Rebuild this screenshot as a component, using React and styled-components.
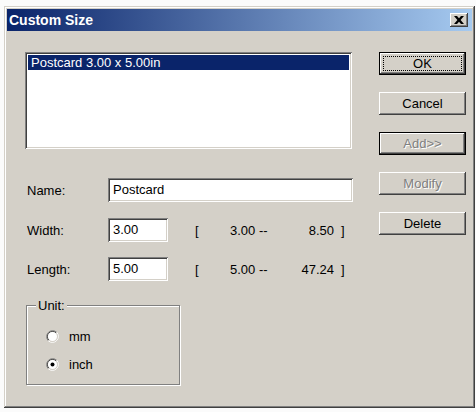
import React from "react";
import styled, { createGlobalStyle } from "styled-components";

const GlobalStyle = createGlobalStyle`
  html, body {
    margin: 0;
    padding: 0;
    background: #fbfbfb;
  }
  body {
    font-family: "Liberation Sans", Arial, sans-serif;
    font-size: 13px;
  }
`;

const Window = styled.div`
  box-sizing: border-box;
  margin: 6px 0 0 4px;
  width: 471px;
  height: 402px;
  padding: 3px;
  background: #d4d0c8;
  box-shadow: inset -1px -1px #404040, inset 1px 1px #d4d0c8,
    inset -2px -2px #808080, inset 2px 2px #ffffff;
  display: flex;
  flex-direction: column;
`;

const TitleBar = styled.div`
  height: 22px;
  display: flex;
  align-items: center;
  justify-content: space-between;
  padding: 0 4px 0 2px;
  background: linear-gradient(to right, #0a246a, #a6caf0);
`;

const TitleText = styled.span`
  color: #fff;
  font-family: "Liberation Sans", Arial, sans-serif;
  font-weight: bold;
  font-size: 14px;
`;

const CloseButton = styled.button`
  box-sizing: border-box;
  width: 18px;
  height: 14px;
  padding: 0;
  border: none;
  background: #d4d0c8;
  display: flex;
  align-items: center;
  justify-content: center;
  box-shadow: inset -1px -1px #404040, inset 1px 1px #fff,
    inset -2px -2px #808080, inset 2px 2px #d4d0c8;
`;

const Body = styled.div`
  display: flex;
  padding: 21px 0 0 18px;
`;

const LeftColumn = styled.div`
  display: flex;
  flex-direction: column;
  width: 335px;
`;

const sunken = `
  box-shadow: inset 1px 1px #808080, inset -1px -1px #fff,
    inset 2px 2px #404040, inset -2px -2px #d4d0c8;
`;

const ListBox = styled.div`
  box-sizing: border-box;
  width: 327px;
  height: 97px;
  padding: 3px;
  background: #fff;
  ${sunken}
`;

const ListItem = styled.div`
  height: 15px;
  line-height: 15px;
  padding-left: 3px;
  color: ${(p) => (p.$selected ? "#fff" : "#000")};
  background: ${(p) => (p.$selected ? "#0a246a" : "transparent")};
`;

const FormRows = styled.div`
  display: flex;
  flex-direction: column;
  margin-top: 29px;
  padding-left: 2px;
`;

const Row = styled.div`
  display: flex;
  align-items: center;
  height: 24px;
  margin-top: ${(p) => p.$gap || 0}px;
`;

const Label = styled.span`
  width: 81px;
  color: #000;
`;

const TextBox = styled.div`
  box-sizing: border-box;
  width: ${(p) => p.$width}px;
  height: 24px;
  line-height: 24px;
  padding-left: 5px;
  background: #fff;
  color: #000;
  ${sunken}
`;

const RangeOpen = styled.span`
  margin-left: 27px;
  width: 35px;
`;

const RangeMin = styled.span`
  width: 64px;
`;

const RangeMax = styled.span`
  width: 40px;
  text-align: right;
`;

const RangeClose = styled.span`
  margin-left: 7px;
`;

const GroupBox = styled.div`
  position: relative;
  box-sizing: border-box;
  width: 154px;
  height: 80px;
  margin: 24px 0 0 1px;
  padding: 24px 0 0 19px;
  border: 1px solid #808080;
  box-shadow: inset 1px 1px #fff, 1px 1px #fff;
  display: flex;
  flex-direction: column;
  gap: 15px;
`;

const Legend = styled.span`
  position: absolute;
  top: -8px;
  left: 9px;
  padding: 0 2px;
  background: #d4d0c8;
  line-height: 15px;
`;

const RadioRow = styled.label`
  display: flex;
  align-items: center;
  height: 13px;
  gap: 10px;
`;

const ButtonColumn = styled.div`
  display: flex;
  flex-direction: column;
  gap: 17px;
  margin-left: 19px;
`;

const Button = styled.button`
  position: relative;
  box-sizing: border-box;
  width: 87px;
  height: 23px;
  padding: 0;
  background: #d4d0c8;
  font-family: "Liberation Sans", Arial, sans-serif;
  font-size: 13px;
  color: ${(p) => (p.disabled ? "#808080" : "#000")};
  text-shadow: ${(p) => (p.disabled ? "1px 1px #fff" : "none")};
  border: ${(p) => (p.$default ? "1px solid #000" : "none")};
  box-shadow: inset -1px -1px #404040, inset 1px 1px #fff,
    inset -2px -2px #808080, inset 2px 2px #d4d0c8;
`;

const FocusRing = styled.span`
  position: absolute;
  inset: 3px;
  border: 1px dotted #000;
`;

const CloseGlyph = () => (
  <svg width="10" height="8" viewBox="0 0 10 8">
    <path d="M0 0h3l2 2.3L7 0h3L6.6 4 10 8H7L5 5.7 3 8H0l3.4-4z" fill="#000" />
  </svg>
);

const RadioMark = ({ checked }) => (
  <svg width="13" height="13" viewBox="0 0 13 13">
    <path d="M2.26 10.74A6 6 0 0 1 10.74 2.26" stroke="#808080" fill="none" />
    <path d="M10.74 2.26A6 6 0 0 1 2.26 10.74" stroke="#fff" fill="none" />
    <path d="M2.96 10.04A5 5 0 0 1 10.04 2.96" stroke="#404040" fill="none" />
    <path d="M10.04 2.96A5 5 0 0 1 2.96 10.04" stroke="#d4d0c8" fill="none" />
    <circle cx="6.5" cy="6.5" r="4.5" fill="#fff" />
    {checked && <circle cx="6.5" cy="6.5" r="2" fill="#000" />}
  </svg>
);

const ranges = [
  { label: "Width:", value: "3.00", min: "3.00", max: "8.50", gap: 16 },
  { label: "Length:", value: "5.00", min: "5.00", max: "47.24", gap: 15 },
];

const App = () => {
  return (
    <>
      <GlobalStyle />
      <Window>
        <TitleBar>
          <TitleText>Custom Size</TitleText>
          <CloseButton>
            <CloseGlyph />
          </CloseButton>
        </TitleBar>
        <Body>
          <LeftColumn>
            <ListBox>
              <ListItem $selected>Postcard 3.00 x 5.00in</ListItem>
            </ListBox>
            <FormRows>
              <Row>
                <Label>Name:</Label>
                <TextBox $width={245}>Postcard</TextBox>
              </Row>
              {ranges.map((r) => (
                <Row key={r.label} $gap={r.gap}>
                  <Label>{r.label}</Label>
                  <TextBox $width={60}>{r.value}</TextBox>
                  <RangeOpen>[</RangeOpen>
                  <RangeMin>{r.min} --</RangeMin>
                  <RangeMax>{r.max}</RangeMax>
                  <RangeClose>]</RangeClose>
                </Row>
              ))}
            </FormRows>
            <GroupBox>
              <Legend>Unit:</Legend>
              <RadioRow>
                <RadioMark />
                mm
              </RadioRow>
              <RadioRow>
                <RadioMark checked />
                inch
              </RadioRow>
            </GroupBox>
          </LeftColumn>
          <ButtonColumn>
            <Button $default>
              <FocusRing />
              OK
            </Button>
            <Button>Cancel</Button>
            <Button $default disabled>
              Add&gt;&gt;
            </Button>
            <Button disabled>Modify</Button>
            <Button>Delete</Button>
          </ButtonColumn>
        </Body>
      </Window>
    </>
  );
};

export default App;
